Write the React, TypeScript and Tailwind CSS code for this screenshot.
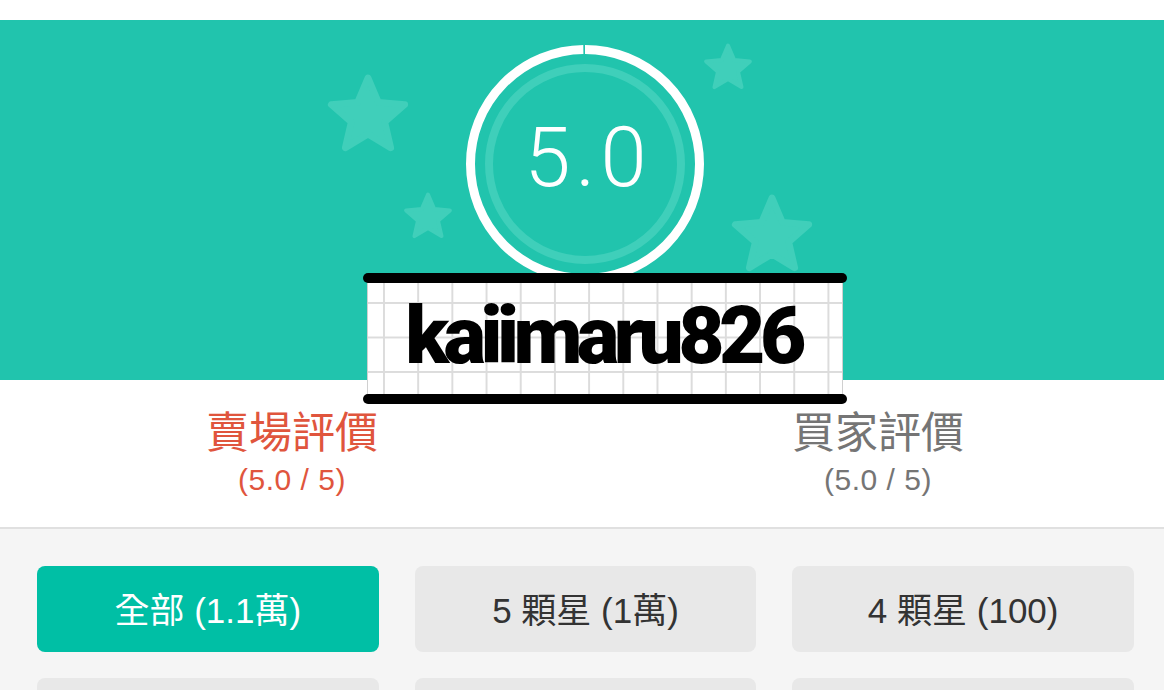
import React from 'react';

const starPoints = (() => {
  const pts: string[] = [];
  for (let i = 0; i < 10; i++) {
    const r = i % 2 === 0 ? 46 : 21;
    const a = (-90 + i * 36) * (Math.PI / 180);
    pts.push(`${(50 + r * Math.cos(a)).toFixed(2)},${(53 + r * Math.sin(a)).toFixed(2)}`);
  }
  return pts.join(' ');
})();

const Star = ({ className }: { className: string }) => (
  <svg viewBox="0 0 100 100" className={className}>
    <polygon points={starPoints} fill="#40cfba" stroke="#40cfba" strokeWidth="8" strokeLinejoin="round" />
  </svg>
);

// second row is below the fold, only its top edge shows
const tabs = [
  { label: '全部 (1.1萬)', active: true },
  { label: '5 顆星 (1萬)', active: false },
  { label: '4 顆星 (100)', active: false },
  { label: '', active: false },
  { label: '', active: false },
  { label: '', active: false },
];

const font = "font-['Liberation_Sans','Noto_Sans_CJK_TC',sans-serif]";

export default function App() {
  return (
    <div className={`w-[1164px] h-[690px] overflow-hidden bg-[#f5f5f5] ${font}`}>
      <div className="h-[20px] bg-white" />

      {/* header */}
      <div className="relative h-[360px] bg-[#21c4ad] flex flex-col items-center pt-[24px]">
        <Star className="absolute left-[326px] top-[52px] w-[84px] h-[84px]" />
        <Star className="absolute left-[403px] top-[171px] w-[50px] h-[50px]" />
        <Star className="absolute left-[703px] top-[22px] w-[50px] h-[50px]" />
        <Star className="absolute left-[730px] top-[172px] w-[84px] h-[84px]" />

        <div className="relative shrink-0 ml-[6px] w-[240px] h-[240px]">
          <svg viewBox="0 0 240 240" className="absolute inset-0 w-full h-full">
            <circle cx="120" cy="120" r="96" fill="none" stroke="#3fcfba" strokeWidth="8" />
            <circle
              cx="120"
              cy="120"
              r="114.5"
              fill="none"
              stroke="#ffffff"
              strokeWidth="9"
              strokeDasharray="717 2.4"
              transform="rotate(-90 120 120)"
            />
          </svg>
          <div className="absolute inset-0 flex items-center justify-center pb-[14px] pl-[6px] text-white text-[83px] leading-none font-light tracking-[5px] font-['Roboto',sans-serif]">
            5.0
          </div>
        </div>

        <div className="relative z-10 shrink-0 ml-[46px] -mt-[11px] w-[484px] flex flex-col">
          <div className="h-[10px] rounded-full bg-black" />
          <div className="mx-[4px] h-[111px] border-x border-[#d0d0d0] bg-white bg-[linear-gradient(to_right,#dcdcdc_1.5px,transparent_1.5px),linear-gradient(to_bottom,#dcdcdc_1.5px,transparent_1.5px)] bg-[size:34.2px_34.5px] bg-[position:15px_19px] flex items-center justify-center">
            <span className="text-black text-[80px] leading-none font-black tracking-[-5.5px] font-['Roboto',sans-serif] pb-[6px] pr-[4px]">
              kaiimaru826
            </span>
          </div>
          <div className="h-[10px] rounded-full bg-black" />
        </div>
      </div>

      {/* tabs */}
      <div className="h-[149px] bg-white border-b-2 border-[#e0e0e0] flex pt-[28px]">
        <div className="w-1/2 flex flex-col items-center pl-[2px] text-[#e0553d]">
          <div className="text-[43px] leading-[50px]">賣場評價</div>
          <div className="text-[30px] leading-[34px] mt-[5px] tracking-[0.5px]">(5.0 / 5)</div>
        </div>
        <div className="w-1/2 flex flex-col items-center pl-[10px] text-[#757575]">
          <div className="text-[43px] leading-[50px]">買家評價</div>
          <div className="text-[30px] leading-[34px] mt-[5px] tracking-[0.5px]">(5.0 / 5)</div>
        </div>
      </div>

      {/* filters */}
      <div className="grid grid-cols-3 gap-x-[36px] gap-y-[26px] pl-[37px] pr-[30px] pt-[37px]">
        {tabs.map((t, i) => (
          <button
            key={i}
            className={`h-[86px] rounded-[8px] text-[35px] flex items-center justify-center pt-[4px] ${
              t.active ? 'bg-[#00bfa5] text-white' : 'bg-[#e8e8e8] text-[#333333]'
            }`}
          >
            {t.label}
          </button>
        ))}
      </div>
    </div>
  );
}
